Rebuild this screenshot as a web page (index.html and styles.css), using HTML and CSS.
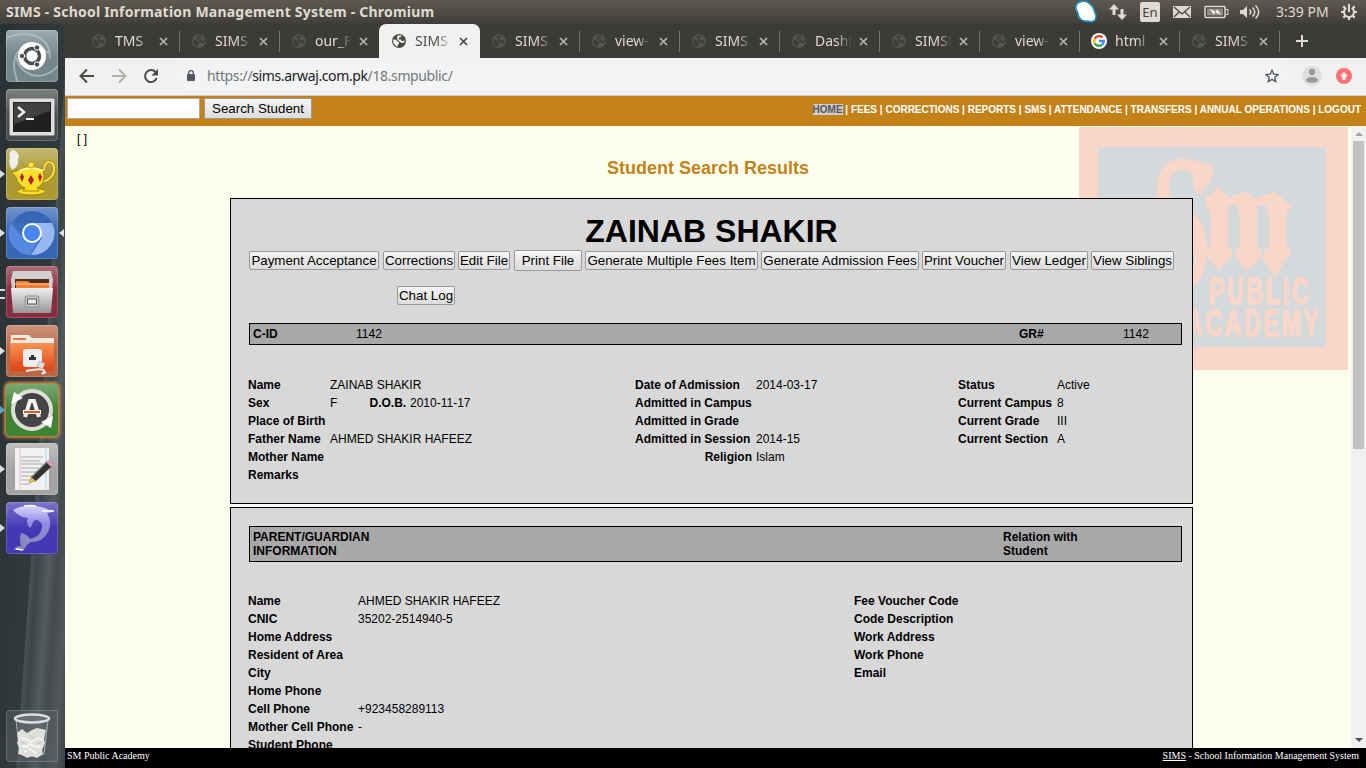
FILE: index.html
```html
<!DOCTYPE html>
<html lang="en">
<head>
<meta charset="utf-8">
<title>SIMS - School Information Management System</title>
<link rel="stylesheet" href="styles.css">
</head>
<body>
<svg width="0" height="0" class="defs">
  <defs>
    <symbol id="globe" viewBox="0 0 14 14"><circle cx="7" cy="7" r="7" fill="currentColor"/><path class="land" d="M1.200 5.800 3.500 5.500 5.500 7.300 7 8 7 9.800 5.800 10.800 5.500 12.700 3.300 11.500 1.400 9ZM5.500 1.400 8.500 1.300 9.500 2.300 8.300 3.300 6.500 4 7 5.400 9 5.600 10 7.300 12.800 6.500 12.300 8.600 9.500 9 7.300 7.300 5.400 5.800 5 3.500Z"/></symbol>
    <symbol id="close" viewBox="0 0 9 9"><path d="M1 1 8 8M8 1 1 8" stroke="currentColor" stroke-width="1.7"/></symbol>
    <linearGradient id="metal" x2="0" y2="1"><stop stop-color="#eee"/><stop offset="1" stop-color="#969696"/></linearGradient>
    <linearGradient id="orange" x2="0" y2="1"><stop stop-color="#f99250"/><stop offset="1" stop-color="#dd4414"/></linearGradient>
    <linearGradient id="dolphin" x2="0" y2="1"><stop stop-color="#d5d5fa"/><stop offset=".4" stop-color="#8e8ee0"/><stop offset="1" stop-color="#8787b5"/></linearGradient>
  </defs>
</svg>
<div class="desktop">
  <header class="panel">
    <span class="panel-title">SIMS - School Information Management System - Chromium</span>
    <div class="indicators">
      <svg width="22" height="24" viewBox="0 0 22 24"><path d="M3 3C7 0 12 1 15 4c4 3 4 6 5 9 3 7-2 10-7 8C7 22 3 18 3 13 0 9 0 6 3 3Z" fill="#fff" stroke="#2492cf" stroke-width="1.6"/></svg>
      <svg width="18" height="24" viewBox="0 0 18 24" fill="#dfdbd2"><path d="M5 4 0 9.500h3.500V15h3V9.500H10ZM13 20 8 14.500h3.500V9h3v5.500H18Z"/></svg>
      <span class="lang">En</span>
      <svg width="18" height="24" viewBox="0 0 18 24"><path fill="#dfdbd2" d="M0 6h18v12H0z"/><path d="m1 7 8 7 8-7M1 17l5-5M17 17l-5-5" fill="none" stroke="#45433e" stroke-width="1.3"/></svg>
      <svg width="25" height="24" viewBox="0 0 25 24"><rect x="1" y="6.500" width="20" height="11" rx="1" fill="#45433e" stroke="#dfdbd2" stroke-width="1.500"/><path fill="#918e86" d="M3 8.500h16v7H3z"/><path d="M22 9.500h2v5h-2" fill="none" stroke="#dfdbd2"/><path d="m6 9 6 3 1-3 4 6-6-3-1 3Z" fill="#fff"/></svg>
      <svg width="21" height="24" viewBox="0 0 21 24"><path fill="#dfdbd2" d="M0 10h3l4-4v12l-4-4H0z"/><path d="M9.500 9.500q2.500 2.500 0 5M12.500 7.500q4.500 4.500 0 9M15.500 5.500q6.500 6.500 0 13" fill="none" stroke="#dfdbd2" stroke-width="1.500"/></svg>
      <span class="clock">3:39 PM</span>
      <svg class="gear" width="16" height="24" viewBox="0 0 16 24"><g fill="none" stroke="#dfdbd2"><path d="M5.300 7.800a5 5 0 1 0 5.400 0" stroke-width="2"/><path d="M8 4v8" stroke-width="2"/><path d="M0 12h3M13 12h3M8 17v3M2.300 6.300l2 2M13.700 6.300l-2 2M2.300 17.700l2-2M13.700 17.700l-2-2" stroke-width="2.200"/></g></svg>
    </div>
  </header>

  <nav class="launcher">
    <div class="tile t-dash"><svg viewBox="0 0 52 52"><g fill="none" stroke="#c2cbcd" stroke-opacity=".6"><path d="M0 8C25-2 45 8 44 29M12 52C-1 22 20 6 44 24M52 36C38 52 15 48 10 26" stroke-width="2"/></g><circle cx="26" cy="26" r="14" fill="#fff"/><circle cx="26" cy="26" r="7.500" fill="none" stroke="#454e51" stroke-width="3.500"/><g fill="#454e51" stroke="#fff"><circle cx="16" cy="26" r="2.700"/><circle cx="31" cy="17.500" r="2.700"/><circle cx="31" cy="34.500" r="2.700"/></g></svg></div>
    <div class="tile t-term"><svg viewBox="0 0 52 52"><rect x="3.500" y="9.500" width="45" height="37" rx="1" fill="#dedede"/><rect x="7" y="13" width="38" height="30" fill="#202020"/><path d="M8 14h36v8L8 35Z" fill="#fff" opacity=".15"/><path d="m12 18 6 5-6 5" fill="none" stroke="#eee" stroke-width="2.500"/><path d="M20 30h8" stroke="#eee" stroke-width="2"/></svg></div>
    <div class="tile t-lamp run"><svg viewBox="0 0 52 52"><path d="M38 22c0-11 11-10 10 0-1 9-7 11-12 12" fill="none" stroke="#a98a0b" stroke-width="3.500"/><path d="M38 22c0-11 11-10 10 0-1 9-7 11-12 12" fill="none" stroke="#f8e447" stroke-width="2"/><ellipse cx="25" cy="43.500" rx="14" ry="3.500" fill="#f8df2c" stroke="#a88409"/><path d="M5 24q4 0 8-2Q25 15 37 22q4 13-6 18l2 3H17l2-3q-8-4-9-11-2-3-5-5Z" fill="#f8df2c" stroke="#a88409"/><path d="M13 23q12-6 24 0" fill="none" stroke="#fff69a" stroke-width="2"/><circle cx="25" cy="17" r="3" fill="#f9e640" stroke="#c7a61d"/><g fill="#bd1b25"><path d="m16 25 2 4-2 5-2-5zM25 27l3 5-3 5-3-5zM34 25l2 4-2 5-2-5z"/></g><path d="M6 22Q2 15 4 10q-2-8 4-8 7 4 4 9 1 8-6 11Z" fill="#eee"/></svg></div>
    <div class="tile t-chrome run active"><svg viewBox="0 0 52 52"><circle cx="26" cy="26" r="22" fill="#3e70c2"/><path d="M5 16A22 22 0 0 0 24 48l8-14-15-3Z" fill="#5588df"/><path d="M26 16h20A22 22 0 0 1 25 48l11-17Z" fill="#98b8f1"/><path d="M7 16a22 22 0 0 1 39 0Z" fill="#3567b5"/><circle cx="26" cy="26" r="10" fill="#fff"/><circle cx="26" cy="26" r="8" fill="#4a86ed"/></svg></div>
    <div class="tile t-files run multi"><svg viewBox="0 0 52 52"><path d="M7 5h38l2 9-1 10H6L5 14Z" fill="#cfcfcf"/><path d="M9 13h34v12H9z" fill="#4d2b1f"/><path d="M10 15h12l2 2h19v10H10z" fill="#f27c32"/><path d="M9 18h34" stroke="#ffc997"/><path d="M5 22h42l-2 25H7Z" fill="url(#metal)"/><rect x="19" y="30" width="14" height="11" rx="2" fill="#c4c4c4" stroke="#929292"/><rect x="21.500" y="33" width="9" height="5" fill="#eee" stroke="#555"/></svg></div>
    <div class="tile t-net run"><svg viewBox="0 0 52 52"><path d="M5 10h18l3 3h22v10H4Z" fill="#f2e9e1"/><path d="M7 14h13" stroke="#e7773f" stroke-width="2"/><path d="M4 18h44v28H4z" fill="url(#orange)"/><rect x="17" y="24" width="19" height="18" rx="3" fill="#eee"/><path d="M23 35v-3h2v-2h3v2h2v3Z" fill="#333"/><path d="M20 46q20-4 18 1-4 3 2 0" fill="none" stroke="#eee" stroke-width="2"/><rect x="32" y="37" width="6" height="6" fill="#ddd" stroke="#999" stroke-width=".5" transform="rotate(25 35 40)"/></svg></div>
    <div class="tile t-update run urgent"><svg viewBox="0 0 52 52"><circle cx="26" cy="26" r="18" fill="#454545"/><circle cx="26" cy="26" r="19" fill="none" stroke="#deded9" stroke-width="4"/><path d="m5 20 3-12 9 6ZM47 32l-2 12-10-6Z" fill="#fff"/><path d="m19 33 5-16h4l5 16" fill="none" stroke="#f2f2f2" stroke-width="4"/><path d="M17 28h18" stroke="#fff" stroke-width="4"/><path d="M18 28h16" stroke="#e75527" stroke-width="2"/></svg></div>
    <div class="tile t-edit run"><svg viewBox="0 0 52 52"><path d="M9 5h34v42H9z" fill="#f1f1f1"/><path d="M14 5v42" stroke="#e9bcc4"/><path d="M40 5v42" stroke="#aed2ee"/><path d="M15 14h22M15 18h19M15 21h22M15 25h18M15 29h16M15 33h15M15 37h12M15 41h9" stroke="#aaa" stroke-width="1"/><path d="m25 34 16-16 5 5-16 15-7 2Z" fill="#333"/><path d="m26 34 16-16" stroke="#888"/><path d="m40 19 3-2 4 4-2 3Z" fill="#df93bb"/><path d="m25 34 5 4-7 2Z" fill="#dbbd45"/></svg></div>
    <div class="tile t-dolphin run"><svg viewBox="0 0 52 52"><path d="M7 8q9-5 22-4 8 1 12 3l7 2q-4 2-7 2 6 10 1 19-5 10-17 10-5 3-7 8l-10 0q1-4 7-4-2-7 0-13 6 1 9 6 9-2 11-8 3-7-2-10-3-3-6 1-1 4-3 6-5-5-2-10Q13 15 7 8Z" fill="url(#dolphin)"/><path d="M18 4q7-1 12 0M36 9h12M10 47l7 1" stroke="#fff" stroke-width="1.500"/></svg></div>
    <div class="tile t-trash"><svg viewBox="0 0 52 52"><path d="m10 10 4 34q12 5 24 0l4-34" fill="#777e80" fill-opacity=".35" stroke="#a8adad"/><ellipse cx="26" cy="8.500" rx="17" ry="4" fill="#687071" stroke="#ddd" stroke-width="2.500"/><path d="m11 23 5-4 5 4 5-3 5-2 9 2-2 9 1 4-3 7 1 4-6 4-5-2-5 2-5-3-4-1 1-6-2-5 1-3Z" fill="#dfe0dc"/><path d="m14 28 6 1 5 3 7-4 5 2M15 36l6 1 3-3 6 3 5-1M18 42l5-3 7 4" fill="none" stroke="#f8f8f5" stroke-width="1.500"/><path d="m15 32 4 1M24 25l4 4M31 34l4-2M20 38l3 3" stroke="#babdba"/></svg></div>
  </nav>

  <main class="browser">
    <div class="tabs">
      <div class="tab"><svg class="globe"><use href="#globe"/></svg><span>TMS</span><svg class="x"><use href="#close"/></svg></div>
      <div class="tab"><svg class="globe"><use href="#globe"/></svg><span>SIMS</span><svg class="x"><use href="#close"/></svg></div>
      <div class="tab nosep"><svg class="globe"><use href="#globe"/></svg><span>our_F</span><svg class="x"><use href="#close"/></svg></div>
      <div class="tab current"><svg class="globe"><use href="#globe"/></svg><span>SIMS</span><svg class="x"><use href="#close"/></svg></div>
      <div class="tab"><svg class="globe"><use href="#globe"/></svg><span>SIMS</span><svg class="x"><use href="#close"/></svg></div>
      <div class="tab"><svg class="globe"><use href="#globe"/></svg><span>view-</span><svg class="x"><use href="#close"/></svg></div>
      <div class="tab"><svg class="globe"><use href="#globe"/></svg><span>SIMS</span><svg class="x"><use href="#close"/></svg></div>
      <div class="tab"><svg class="globe"><use href="#globe"/></svg><span>Dashb</span><svg class="x"><use href="#close"/></svg></div>
      <div class="tab"><svg class="globe"><use href="#globe"/></svg><span>SIMS!</span><svg class="x"><use href="#close"/></svg></div>
      <div class="tab"><svg class="globe"><use href="#globe"/></svg><span>view-</span><svg class="x"><use href="#close"/></svg></div>
      <div class="tab"><svg class="google" viewBox="0 0 16 16"><circle cx="8" cy="8" r="8" fill="#fff"/><g fill="none" stroke-width="2.400"><path d="M11.500 4.500A4.900 4.900 0 0 0 3.700 5.700" stroke="#ea4335"/><path d="M3.700 5.700a4.900 4.900 0 0 0 0 4.600" stroke="#fbbc05"/><path d="M3.700 10.300a4.900 4.900 0 0 0 7.500 1.300" stroke="#34a853"/><path d="M11.200 11.600A4.900 4.900 0 0 0 12.800 8H8" stroke="#4285f4"/></g></svg><span>html</span><svg class="x"><use href="#close"/></svg></div>
      <div class="tab"><svg class="globe"><use href="#globe"/></svg><span>SIMS</span><svg class="x"><use href="#close"/></svg></div>
      <svg class="plus" viewBox="0 0 12 12"><path d="M6 0v12M0 6h12" stroke="#dfdbd2" stroke-width="2"/></svg>
    </div>
    <div class="toolbar">
      <svg class="tb" viewBox="0 0 16 16"><path d="M15 8H2M8 1.500 1.500 8 8 14.500" fill="none" stroke="#4c4a46" stroke-width="2"/></svg>
      <svg class="tb" viewBox="0 0 16 16"><path d="M1 8h13M8 1.500 14.500 8 8 14.500" fill="none" stroke="#b2b0ad" stroke-width="2"/></svg>
      <svg class="tb" viewBox="0 0 16 16"><path d="M13.700 10A6 6 0 1 1 12.500 4" fill="none" stroke="#4c4a46" stroke-width="2"/><path d="M15 1v6.500H8.500Z" fill="#4c4a46"/></svg>
      <div class="omnibox">
        <svg width="8" height="12" viewBox="0 0 8 12"><rect y="4" width="8" height="7" rx="1" fill="#55585c"/><path d="M1.700 5V3a2.300 2.300 0 0 1 4.600 0v2" fill="none" stroke="#55585c" stroke-width="1.300"/></svg>
        <span class="url">https://<b>sims.arwaj.com.pk</b>/18.smpublic/</span>
        <svg class="star" width="14" height="14" viewBox="0 0 14 14"><path d="m7 1.300 1.700 3.900 4.300.4-3.200 2.800.9 4.200L7 10.400l-3.700 2.200.9-4.200L1 5.600l4.300-.4Z" fill="none" stroke="#55585c" stroke-width="1.400"/></svg>
      </div>
      <svg class="avatar" width="20" height="20" viewBox="0 0 20 20"><circle cx="10" cy="10" r="10" fill="#dfdfdf"/><circle cx="10" cy="6" r="3.200" fill="#9a9a9a"/><ellipse cx="10" cy="14" rx="6" ry="3" fill="#9a9a9a"/></svg>
      <svg width="16" height="16" viewBox="0 0 16 16"><circle cx="8" cy="8" r="8" fill="#ff7078"/><path d="M8 4 4 8.300h2.500V12h3V8.300H12Z" fill="#fff"/></svg>
    </div>

    <div class="navbar">
      <input class="search" type="text" aria-label="Student">
      <button class="btn wide">Search Student</button>
      <div class="menu"><a class="here">HOME</a> | <a>FEES</a> | <a>CORRECTIONS</a> | <a>REPORTS</a> | <a>SMS</a> | <a>ATTENDANCE</a> | <a>TRANSFERS</a> | <a>ANNUAL OPERATIONS</a> | <a>LOGOUT</a></div>
    </div>

    <div class="viewport">
      <div class="page">
        <svg class="crest" width="269" height="243" viewBox="0 0 269 243">
          <path fill="#fad6c8" d="M0 0h269v243H0z"/><path fill="#d4dadc" d="M19 20h228v200H19z"/>
          <g fill="#fad6c8" stroke="#fad6c8">
            <text class="mono" transform="translate(72 160) scale(.56 1)" font-size="192" stroke-width="1">S</text>
            <ellipse cx="124" cy="50" rx="8" ry="15" transform="rotate(25 124 50)"/>
            <text class="mono" transform="translate(125 128) scale(.82 1)" font-size="128" stroke-width="3">m</text>
            <path d="m138 60 12 11-10 12-15-1zM165 64l14 10-10 10-12-8zM193 64l10 12 10 2-12 16-13-12zM138 116l13 14-11 13-12-15zM168 116l14 13-14 15-12-16zM198 114l14 8-16 28-13-20z"/>
            <g class="block" font-size="37.500" stroke-width="1.800"><text transform="translate(130 177) scale(.61 1)" textLength="163">PUBLIC</text><text transform="translate(107 209) scale(.6 1)" textLength="221">ACADEMY</text></g>
          </g>
        </svg>
        <p class="crumb">[ ]</p>
        <h2>Student Search Results</h2>
        <section class="card first">
          <h1>ZAINAB SHAKIR</h1>
          <div class="actions">
            <button class="btn w130">Payment Acceptance</button><button class="btn w72">Corrections</button><button class="btn w52">Edit File</button><button class="btn print">Print File</button><button class="btn w173">Generate Multiple Fees Item</button><button class="btn w158">Generate Admission Fees</button><button class="btn w84">Print Voucher</button><button class="btn w78">View Ledger</button><button class="btn w83">View Siblings</button>
          </div>
          <button class="btn chat">Chat Log</button>
          <div class="strip ids"><b>C-ID</b><span>1142</span><b>GR#</b><span>1142</span></div>
          <div class="facts student">
            <b>Name</b><span>ZAINAB SHAKIR</span><b>Date of Admission</b><span>2014-03-17</span><b>Status</b><span>Active</span>
            <b>Sex</b><span class="sex"><span>F</span><b>D.O.B.</b><span>2010-11-17</span></span><b>Admitted in Campus</b><span></span><b>Current Campus</b><span>8</span>
            <b>Place of Birth</b><span></span><b>Admitted in Grade</b><span></span><b>Current Grade</b><span>III</span>
            <b>Father Name</b><span>AHMED SHAKIR HAFEEZ</span><b>Admitted in Session</b><span>2014-15</span><b>Current Section</b><span>A</span>
            <b>Mother Name</b><span></span><b class="right">Religion</b><span>Islam</span><span></span><span></span>
            <b>Remarks</b>
          </div>
        </section>
        <section class="card second">
          <div class="strip guardian"><b>PARENT/GUARDIAN<br>INFORMATION</b><b>Relation with<br>Student</b></div>
          <div class="facts parent">
            <b>Name</b><span>AHMED SHAKIR HAFEEZ</span><b>Fee Voucher Code</b>
            <b>CNIC</b><span>35202-2514940-5</span><b>Code Description</b>
            <b>Home Address</b><span></span><b>Work Address</b>
            <b>Resident of Area</b><span></span><b>Work Phone</b>
            <b>City</b><span></span><b>Email</b>
            <b>Home Phone</b><span></span><span></span>
            <b>Cell Phone</b><span>+923458289113</span><span></span>
            <b>Mother Cell Phone</b><span>-</span><span></span>
            <b>Student Phone</b><span></span><span></span>
          </div>
        </section>
      </div>
      <div class="scrollbar"><i class="up"></i><div class="thumb"></div><i class="down"></i></div>
    </div>
    <footer class="footer"><span>SM Public Academy</span><span class="credit"><u>SIMS</u> - School Information Management System</span></footer>
  </main>
</div>
</body>
</html>
```
FILE: styles.css
```css
* { box-sizing: border-box; }
body { margin: 0; overflow: hidden; font: 12px/18px "Liberation Sans", sans-serif; color: #000; }
.defs { position: absolute; }
svg { display: block; flex: none; }
.desktop { display: grid; grid-template: 24px 744px / 65px 1301px; width: 1366px; height: 768px; }

/* Top panel */
.panel { grid-column: 1 / 3; display: flex; justify-content: space-between; background: linear-gradient(#5e5a50, #403e39); color: #dfdbd2; font: 14px/24px "Noto Sans", sans-serif; }
.panel-title { padding-left: 6px; font-weight: bold; font-size: 14px; white-space: nowrap; letter-spacing: .21px; }
.indicators { display: flex; width: 291px; }
.indicators svg:nth-child(2) { margin-left: 12px; }
.lang { width: 20px; height: 20px; margin: 2px 0 0 13px; border-radius: 2px; background: #dfdbd2; color: #45433e; text-align: center; line-height: 20px; font-size: 13px; }
.lang + svg { margin-left: 13px; }
.lang + svg + svg { margin-left: 13px; }
.lang + svg + svg + svg { margin-left: 11px; }
.clock { margin-left: 15px; width: 54px; white-space: nowrap; font-size: 14px; }
.gear { margin-left: 11px; }

/* Launcher */
.launcher { display: flex; flex-direction: column; gap: 7px; padding: 6px 0 0 6px; background: linear-gradient(94deg, #293134 0, #30393c 58%, #485154 59%, #3b4447 64%, #535c5e 74%, #414a4d 81%, #50595c 91%, #394245 100%); }
.tile { position: relative; width: 52px; height: 52px; border-radius: 4px; box-shadow: inset 0 0 0 1px #ffffff30; background-image: linear-gradient(#ffffff50, #ffffff05 50%); }
.tile svg { width: 52px; height: 52px; }
.t-dash { background-color: #71858b; }
.t-term { background-color: #44494a; }
.t-lamp { background-color: #ab9830; }
.t-chrome { background-color: #3264b5; }
.t-files { background-color: #87283b; }
.t-net { background-color: #b76440; }
.t-update { background-color: #3b8131; }
.t-edit { background-color: #a2a2a2; }
.t-dolphin { background-color: #4034b2; }
.t-trash { margin-top: 149px; background: #59636580; }
.urgent { box-shadow: 0 0 3px 2px #d28b43; }
.run::before { content: ""; position: absolute; left: -6px; top: 22px; border: 4px solid transparent; border-left: 5px solid #ddd; border-right: 0; }
.active::after { content: ""; position: absolute; right: -6px; top: 22px; border: 4px solid transparent; border-right: 5px solid #ddd; border-left: 0; }
.multi::before { top: 23px; height: 6px; width: 5px; border: solid #ddd; border-width: 2px 0; }
.urgent::before { border-left-color: #57a4d2; }

/* Browser chrome */
.browser { display: flex; flex-direction: column; height: 744px; min-width: 0; }
.tabs { display: flex; height: 34px; padding-left: 14px; background: #3c3b37; color: #dfdbd2; }
.tab { position: relative; display: flex; align-items: center; width: 100px; height: 34px; padding-left: 13px; font: 14px/34px "Noto Sans", sans-serif; }
.tab::after { content: ""; position: absolute; right: -1px; top: 7px; width: 1px; height: 21px; background: #77756f; }
.nosep::after, .current::after { display: none; }
.globe { width: 14px; height: 14px; color: #54534f; --land: #3c3b37; }
.land { fill: var(--land); }
.tab span { width: 36px; margin-left: 9px; overflow: hidden; white-space: nowrap; -webkit-mask-image: linear-gradient(90deg, #000 60%, transparent 102%); mask-image: linear-gradient(90deg, #000 60%, transparent 102%); }
.x { width: 9px; height: 9px; margin-left: 8px; color: #b7b4ad; }
.current { width: 101px; margin-right: -1px; background: #f2f1f0; color: #4c4a46; border-radius: 7px 7px 0 0; }
.current .globe { color: #4c4a46; --land: #f2f1f0; }
.current .x { color: #4c4a46; }
.google { width: 16px; height: 16px; margin-left: -1px; }
.google + span { margin-left: 8px; }
.plus { width: 12px; height: 12px; margin: 11px 0 0 17px; }
.toolbar { display: flex; align-items: center; height: 38px; padding: 0 14px 2px 14px; background: #f2f1f0; border-bottom: 1px solid #cfcecb; }
.tb { width: 16px; height: 16px; margin-right: 16px; }
.omnibox { display: flex; align-items: center; width: 1116px; height: 28px; margin-left: -1px; padding: 0 11px 0 13px; border-radius: 14px; background: #f1f3f4; }
.url { margin-left: 12px; color: #75787b; font: 14px/28px "Noto Sans", sans-serif; letter-spacing: -.38px; }
.url b { color: #222; font-weight: normal; }
.star { margin-left: auto; }
.avatar { margin: 0 14px 0 12px; }

/* SIMS page */
.navbar { display: flex; align-items: flex-start; height: 30px; padding: 2px 5px 0 2px; background: #c28217; color: #fff; }
.search { width: 133px; height: 21px; padding: 0; border: 1px solid #a9a9a9; background: #fff; }
.btn { height: 19px; padding: 0; border: 1px solid #999; border-radius: 2px; background: linear-gradient(#f5f5f5, #dcdcdc); color: #000; font: 13.333px/17px "Liberation Sans", sans-serif; white-space: nowrap; text-align: center; }
.wide { width: 108px; height: 21px; margin-left: 4px; border-radius: 0; line-height: 19px; }
.menu { margin-left: auto; padding-top: 6px; font: bold 10px/12px "Liberation Sans", sans-serif; white-space: nowrap; }
.here { background: #ccc; color: #555; }
.viewport { position: relative; display: flex; height: 622px; overflow: hidden; }
.page { position: relative; width: 1286px; height: 622px; overflow: hidden; background: #fdffee; }
.crest { position: absolute; left: 1014px; top: 1px; }
.mono { font-family: "Liberation Serif", serif; font-weight: bold; }
.block { font-family: "Liberation Sans", sans-serif; font-weight: bold; }
.crumb { margin: 0; padding: 4px 0 0 12px; }
h2 { margin: 9px 0 0; text-align: center; font-size: 18px; line-height: 22px; color: #c28217; }
.card { position: relative; width: 963px; margin-left: 165px; border: 1px solid #000; background: #d8d8d8; }
.first { height: 306px; margin-top: 19px; padding: 14px 10px 0 17px; }
h1 { margin: 0 -10px 0 -17px; text-align: center; font-size: 32px; line-height: 37px; }
.actions { display: flex; align-items: center; height: 21px; padding-left: 1px; }
.w130 { width: 130px; margin-right: 4px; }
.w72 { width: 72px; margin-right: 3px; }
.w52 { width: 52px; margin-right: 4px; }
.print { width: 68px; height: 21px; margin-right: 3px; line-height: 19px; }
.w173 { width: 173px; margin-right: 3px; }
.w158 { width: 158px; margin-right: 3px; }
.w84 { width: 84px; margin-right: 4px; }
.w78 { width: 78px; margin-right: 3px; }
.w83 { width: 83px; }
.chat { display: block; width: 58px; margin: 15px 0 18px 149px; }
.strip { display: grid; margin-left: 1px; border: 1px solid #000; background: #a8a8a8; padding-left: 3px; }
.ids { height: 22px; line-height: 20px; grid-template-columns: 103px 663px 104px auto; }
.guardian { height: 36px; padding-top: 3px; line-height: 14px; grid-template-columns: 750px auto; }
.facts { display: grid; grid-auto-rows: 18px; white-space: nowrap; }
.student { margin-top: 31px; grid-template-columns: 82px 305px 121px 202px 99px auto; }
.sex { display: grid; grid-template-columns: 39.500px 40.500px auto; }
.right { text-align: right; padding-right: 4px; }
.second { height: 400px; margin-top: 3px; padding: 18px 10px 0 17px; }
.parent { margin-top: 30px; grid-template-columns: 110px 496px auto; }
.scrollbar { display: flex; flex-direction: column; align-items: center; width: 15px; background: #f1f1f1; }
.up { margin-top: 6px; border: 4px solid transparent; border-top: 0; border-bottom: 4px solid #a3a3a3; }
.thumb { width: 11px; height: 308px; margin-top: 5px; background: #c1c1c1; }
.down { margin: auto 0 6px; border: 4px solid transparent; border-bottom: 0; border-top: 4px solid #505050; }
.footer { display: flex; justify-content: space-between; height: 20px; padding: 0 7px 0 2px; background: #000; color: #fff; font: 10px/16px "Liberation Serif", serif; }
```
